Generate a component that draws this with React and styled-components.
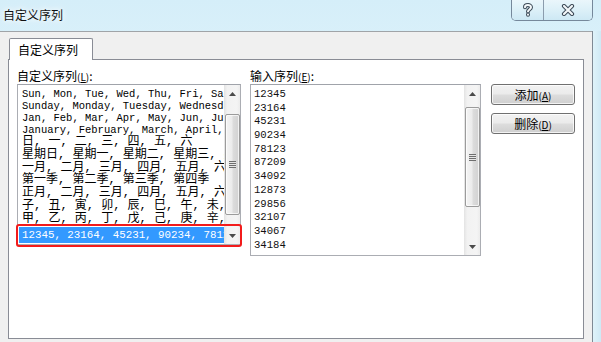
import React from 'react';
import styled, { createGlobalStyle } from 'styled-components';

const GlobalStyle = createGlobalStyle`
  html, body {
    margin: 0;
    padding: 0;
    background: #f0f0f0;
  }
  body {
    font-family: 'Noto Sans CJK SC', 'Liberation Sans', sans-serif;
  }
`;

const Window = styled.div`
  width: 601px;
  height: 342px;
  display: flex;
  flex-direction: column;
  overflow: hidden;
  background: linear-gradient(180deg, #d5eef9 0%, #e2f5fc 40%, #d9f0f9 100%);
`;

const TitleBar = styled.div`
  height: 31px;
  flex: none;
  display: flex;
  justify-content: space-between;
  align-items: flex-start;
`;

const Title = styled.div`
  font-size: 12px;
  line-height: 12px;
  padding: 9px 0 0 3px;
  color: #111;
  text-shadow: 0 0 5px #fff, 0 0 8px #fff;
`;

const CaptionGroup = styled.div`
  display: flex;
  height: 20px;
  margin-right: 8px;
  border: 1px solid #76889b;
  border-top: none;
  border-radius: 0 0 5px 5px;
  overflow: hidden;
  box-shadow: inset 0 0 0 1px rgba(255, 255, 255, 0.7);
`;

const CaptionButton = styled.div`
  width: ${p => p.$w}px;
  display: flex;
  align-items: center;
  justify-content: center;
  background: linear-gradient(180deg, #eaf6fb 0%, #dcf0f8 50%, #cde8f4 100%);
  & + & {
    border-left: 1px solid #8b9cad;
  }
`;

const Body = styled.div`
  flex: 1;
  display: flex;
`;

const Client = styled.div`
  width: 592px;
  flex: none;
  display: flex;
  flex-direction: column;
  background: #f0f0f0;
  border-top: 1px solid #a0a4a8;
  padding: 6px 8px 0 8px;
  box-sizing: border-box;
`;

const Frame = styled.div`
  flex: 1;
  border-left: 1px solid #7f8a95;
  background: linear-gradient(90deg, #dff3fa, #cfe9f5);
`;

const TabStrip = styled.div`
  display: flex;
  height: 21px;
  flex: none;
`;

const Tab = styled.div`
  margin-left: 1px;
  width: 84px;
  height: 22px;
  box-sizing: border-box;
  border: 1px solid #898c95;
  border-bottom: none;
  border-radius: 2px 2px 0 0;
  background: #fff;
  position: relative;
  z-index: 1;
  font-size: 12px;
  line-height: 22px;
  padding-left: 8px;
  color: #000;
`;

const Panel = styled.div`
  height: 280px;
  box-sizing: border-box;
  border: 1px solid #898c95;
  background: #fff;
  padding: 8px 0 0 8px;
  display: flex;
  align-items: flex-start;
`;

const Column = styled.div`
  width: ${p => p.$w}px;
  margin-right: ${p => p.$gap || 0}px;
  display: flex;
  flex-direction: column;
`;

const Label = styled.div`
  height: 16px;
  font-size: 12px;
  line-height: 15px;
  color: #000;
  white-space: nowrap;
`;

const Key = styled.span`
  font-size: 10px;
  u {
    text-decoration: underline;
  }
`;

const BoxWrap = styled.div`
  position: relative;
`;

const Box = styled.div`
  height: ${p => p.$h}px;
  box-sizing: border-box;
  border: 1px solid #abadb3;
  border-top-color: #a0a3aa;
  display: flex;
  background: #fff;
`;

const ListContent = styled.div`
  flex: 1;
  min-width: 0;
  display: flex;
  flex-direction: column;
`;

const Lines = styled.div`
  flex: 1;
  overflow: hidden;
  padding: 3px 0 0 4px;
`;

const Line = styled.div`
  white-space: pre;
  font-family: 'Liberation Mono', 'Noto Sans CJK SC', monospace;
  font-size: ${p => (p.$cjk ? 12 : 10.5)}px;
  line-height: ${p => (p.$cjk ? 12.8 : 12)}px;
  height: ${p => (p.$cjk ? 12.8 : 12)}px;
  color: #000;
`;

const SelectedRow = styled.div`
  height: 16px;
  margin: 0 0 1px 1px;
  padding-left: 3px;
  background: #3399ff;
  color: #fff;
  white-space: pre;
  overflow: hidden;
  font-family: 'Liberation Mono', monospace;
  font-size: 10.8px;
  line-height: 16px;
`;

const Marker = styled.div`
  position: absolute;
  left: -1px;
  right: -1px;
  bottom: -2px;
  height: 19px;
  border: 2.5px solid #f21b1b;
  border-radius: 3px;
  pointer-events: none;
`;

const TextArea = styled.div`
  flex: 1;
  padding: 3px 0 0 3px;
  overflow: hidden;
`;

const NumberLine = styled.div`
  font-family: 'Liberation Mono', monospace;
  font-size: 10.6px;
  line-height: 13.7px;
  height: 13.7px;
  color: #111;
`;

const Scrollbar = styled.div`
  width: 16px;
  flex: none;
  display: flex;
  flex-direction: column;
  background: linear-gradient(90deg, #e3e3e3 0%, #f2f2f2 20%, #f4f4f4 80%, #ececec 100%);
`;

const ArrowButton = styled.div`
  height: 17px;
  flex: none;
  display: flex;
  align-items: center;
  justify-content: center;
`;

const Track = styled.div`
  flex: 1;
  display: flex;
  flex-direction: column;
  align-items: center;
`;

const Thumb = styled.div`
  margin-top: ${p => p.$top}px;
  width: 15px;
  height: ${p => p.$h}px;
  box-sizing: border-box;
  border: 1px solid #9b9b9b;
  border-radius: 2px;
  background: linear-gradient(90deg, #f4f4f4 0%, #ececec 45%, #dcdcdc 55%, #d2d2d2 100%);
  box-shadow: inset 0 0 0 1px rgba(255, 255, 255, 0.7);
  display: flex;
  align-items: center;
  justify-content: center;
`;

const Grip = styled.div`
  width: 7px;
  height: 7px;
  background: repeating-linear-gradient(180deg, #6e6e6e 0, #6e6e6e 1px, #d8d8d8 1px, #f4f4f4 2px);
`;

const ButtonCol = styled.div`
  margin-top: 16px;
  display: flex;
  flex-direction: column;
  gap: 8px;
`;

const Button = styled.div`
  width: 84px;
  height: 21px;
  box-sizing: border-box;
  border: 1px solid #707070;
  border-radius: 3px;
  background: linear-gradient(180deg, #f2f2f2 0%, #ebebeb 48%, #dddddd 52%, #cfcfcf 100%);
  box-shadow: inset 0 0 0 1px rgba(255, 255, 255, 0.75);
  font-size: 12px;
  line-height: 19px;
  text-align: center;
  color: #000;
`;

const Arrow = ({ up }) => (
  <svg width="7" height="4" viewBox="0 0 7 4">
    <polygon points={up ? '3.5,0 7,4 0,4' : '0,0 7,0 3.5,4'} fill="#4a4a4a" />
  </svg>
);

const ScrollBar = ({ top, h }) => (
  <Scrollbar>
    <ArrowButton><Arrow up /></ArrowButton>
    <Track>
      <Thumb $top={top} $h={h}><Grip /></Thumb>
    </Track>
    <ArrowButton><Arrow /></ArrowButton>
  </Scrollbar>
);

const HelpGlyph = () => (
  <svg width="12" height="14" viewBox="0 0 12 14">
    <g fill="none" strokeLinecap="round">
      <path d="M3 4.2 C3 1.5 9 1.3 9 4.3 C9 6.4 6 6.5 6 8.6" stroke="#3d4a57" strokeWidth="4" />
      <path d="M3 4.2 C3 1.5 9 1.3 9 4.3 C9 6.4 6 6.5 6 8.6" stroke="#f4f8fa" strokeWidth="2" />
      <path d="M6 11.6 L6 11.8" stroke="#3d4a57" strokeWidth="4" />
      <path d="M6 11.6 L6 11.8" stroke="#f4f8fa" strokeWidth="2" />
    </g>
  </svg>
);

const CloseGlyph = () => (
  <svg width="14" height="12" viewBox="0 0 14 12">
    <g strokeLinecap="round">
      <path d="M3 2 L11 10 M11 2 L3 10" stroke="#3d4a57" strokeWidth="4.2" />
      <path d="M3 2 L11 10 M11 2 L3 10" stroke="#f4f8fa" strokeWidth="2.2" />
    </g>
  </svg>
);

const customLists = [
  { text: 'Sun, Mon, Tue, Wed, Thu, Fri, Sat' },
  { text: 'Sunday, Monday, Tuesday, Wednesday, Thursday, Friday, Saturday' },
  { text: 'Jan, Feb, Mar, Apr, May, Jun, Jul, Aug, Sep, Oct, Nov, Dec' },
  { text: 'January, February, March, April, May, June, July, August' },
  { text: '日, 一, 二, 三, 四, 五, 六', cjk: true },
  { text: '星期日, 星期一, 星期二, 星期三, 星期四, 星期五, 星期六', cjk: true },
  { text: '一月, 二月, 三月, 四月, 五月, 六月, 七月, 八月', cjk: true },
  { text: '第一季, 第二季, 第三季, 第四季', cjk: true },
  { text: '正月, 二月, 三月, 四月, 五月, 六月, 七月, 八月', cjk: true },
  { text: '子, 丑, 寅, 卯, 辰, 巳, 午, 未, 申, 酉, 戌, 亥', cjk: true },
  { text: '甲, 乙, 丙, 丁, 戊, 己, 庚, 辛, 壬, 癸', cjk: true },
];

const entries = [
  '12345', '23164', '45231', '90234', '78123', '87209',
  '34092', '12873', '29856', '32107', '34067', '34184',
];

const App = () => (
  <>
    <GlobalStyle />
    <Window>
      <TitleBar>
        <Title>自定义序列</Title>
        <CaptionGroup>
          <CaptionButton $w={31}><HelpGlyph /></CaptionButton>
          <CaptionButton $w={48}><CloseGlyph /></CaptionButton>
        </CaptionGroup>
      </TitleBar>
      <Body>
        <Client>
          <TabStrip>
            <Tab>自定义序列</Tab>
          </TabStrip>
          <Panel>
            <Column $w={224} $gap={9}>
              <Label>自定义序列<Key>(<u>L</u>)</Key>:</Label>
              <BoxWrap>
                <Box $h={161}>
                  <ListContent>
                    <Lines>
                      {customLists.map((l, i) => (
                        <Line key={i} $cjk={l.cjk}>{l.text}</Line>
                      ))}
                    </Lines>
                    <SelectedRow>12345, 23164, 45231, 90234, 78123, 87209</SelectedRow>
                  </ListContent>
                  <ScrollBar top={12} h={101} />
                </Box>
                <Marker />
              </BoxWrap>
            </Column>
            <Column $w={231} $gap={10}>
              <Label>输入序列<Key>(<u>E</u>)</Key>:</Label>
              <Box $h={172}>
                <TextArea>
                  {entries.map(n => <NumberLine key={n}>{n}</NumberLine>)}
                </TextArea>
                <ScrollBar top={5} h={100} />
              </Box>
            </Column>
            <ButtonCol>
              <Button>添加<Key>(<u>A</u>)</Key></Button>
              <Button>删除<Key>(<u>D</u>)</Key></Button>
            </ButtonCol>
          </Panel>
        </Client>
        <Frame />
      </Body>
    </Window>
  </>
);

export default App;
